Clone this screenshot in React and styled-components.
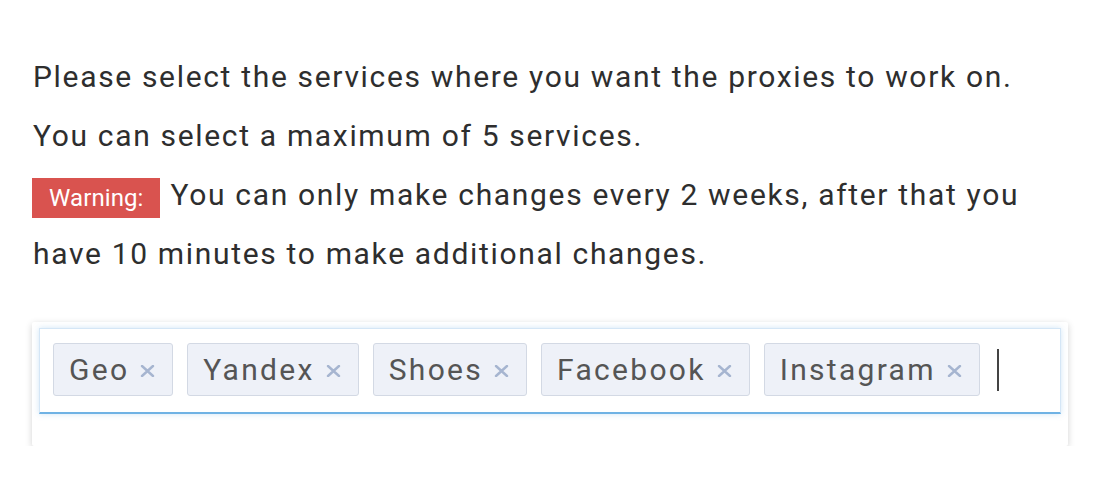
import React from "react";
import styled, { createGlobalStyle } from "styled-components";

const GlobalStyle = createGlobalStyle`
  body {
    margin: 0;
    background: #fff;
    font-family: Roboto, "Liberation Sans", Arial, sans-serif;
  }
`;

const Page = styled.div`
  padding: 47px 28px 0 33px;
`;

const Intro = styled.div`
  font-size: 30px;
  line-height: 59px;
  letter-spacing: 1.67px;
  color: #2e2e2e;
`;

const Badge = styled.span`
  display: inline-block;
  height: 40px;
  background: #d9534f;
  color: #fff;
  font-size: 24px;
  line-height: 40px;
  letter-spacing: 0.1px;
  padding: 0 16px 0 17px;
  margin-left: -1px;
  margin-right: 11px;
  vertical-align: -1px;
`;

const Card = styled.div`
  margin-top: 39px;
  width: 1036px;
  margin-left: -1px;
  box-sizing: border-box;
  background: #fff;
  padding: 6px 7px 32px 7px;
  box-shadow: 0 2px 7px rgba(0, 0, 0, 0.18);
  border-radius: 2px;
`;

const Field = styled.div`
  display: flex;
  align-items: center;
  gap: 14px;
  padding: 14px 13px 16px 13px;
  border: 1px solid #d4e6f6;
  border-bottom: 2px solid #6fb2e4;
  box-shadow: 0 0 6px rgba(120, 180, 230, 0.35);
`;

const Tag = styled.span`
  display: inline-flex;
  align-items: center;
  height: 53px;
  box-sizing: border-box;
  padding: 0 17px 0 15px;
  background: #eef1f8;
  border: 1px solid #d3d9e4;
  border-radius: 3px;
  color: #555;
  font-size: 30px;
  letter-spacing: 2.3px;
`;

const Remove = styled.svg`
  margin-left: 11px;
  margin-top: 3px;
  flex: none;
`;

const Caret = styled.span`
  width: 2px;
  height: 42px;
  margin-left: 3px;
  background: #444;
`;

const services = ["Geo", "Yandex", "Shoes", "Facebook", "Instagram"];

export default function App() {
  return (
    <Page>
      <GlobalStyle />
      <Intro>
        Please select the services where you want the proxies to work on.
        <br />
        You can select a maximum of 5 services.
        <br />
        <Badge>Warning:</Badge>You can only make changes every 2 weeks, after that you
        <br />
        have 10 minutes to make additional changes.
      </Intro>
      <Card>
        <Field>
          {services.map((s) => (
            <Tag key={s}>
              {s}
              <Remove width="15" height="12" viewBox="0 0 15 12">
                <path
                  d="M2 1 L13 11 M13 1 L2 11"
                  stroke="#a6b5d0"
                  strokeWidth="2.4"
                  strokeLinecap="round"
                />
              </Remove>
            </Tag>
          ))}
          <Caret />
        </Field>
      </Card>
    </Page>
  );
}
